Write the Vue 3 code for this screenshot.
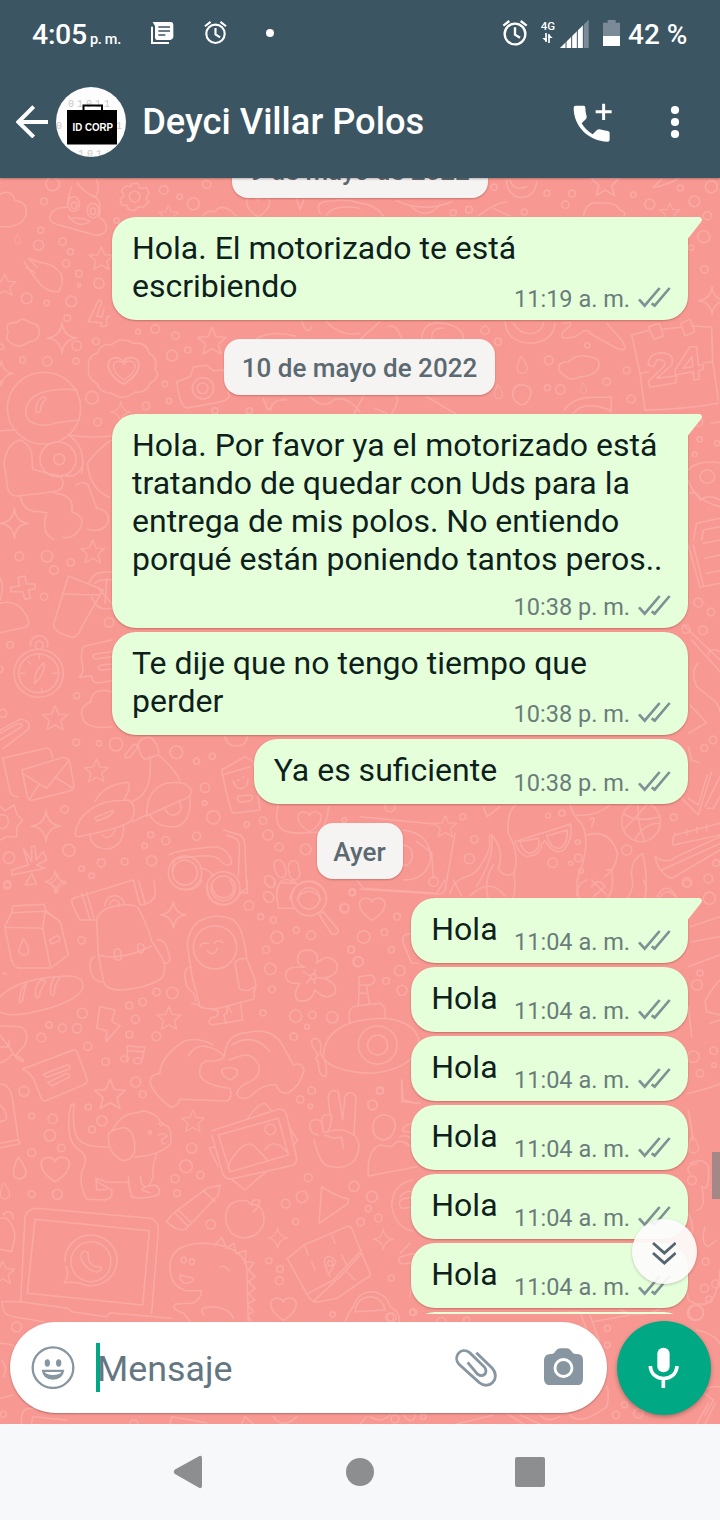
<script setup>
const items = [
  { kind: 'date', text: '9 de mayo de 2022', width: 256 },
  { kind: 'msg', lines: ['Hola. El motorizado te está', 'escribiendo'], time: '11:19 a. m.', tail: true, mode: 'overlap' },
  { kind: 'date', text: '10 de mayo de 2022', width: 271 },
  {
    kind: 'msg',
    lines: ['Hola. Por favor ya el motorizado está', 'tratando de quedar con Uds para la', 'entrega de mis polos. No entiendo', 'porqué están poniendo tantos peros..'],
    time: '10:38 p. m.', tail: true, mode: 'below'
  },
  { kind: 'msg', lines: ['Te dije que no tengo tiempo que', 'perder'], time: '10:38 p. m.', mode: 'overlap' },
  { kind: 'msg', lines: ['Ya es suficiente'], time: '10:38 p. m.', mode: 'inline' },
  { kind: 'date', text: 'Ayer', width: 86 },
  ...Array.from({ length: 7 }, (_, i) => ({
    kind: 'msg', lines: ['Hola'], time: '11:04 a. m.', tail: i === 0, mode: 'inline'
  }))
]

const star = 'M0-42 L12-14 L42-12 L19 8 L27 38 L0 22 L-27 38 L-19 8 L-42-12 L-12-14Z'
const spark = 'M0-42 Q4-4 40 0 Q4 4 0 42 Q-4 4-40 0 Q-4-4 0-42Z'
const heart = 'M0 34 C-58-4-40-42-8-30 Q-2-28 0-20 Q4-30 12-32 C46-38 54 2 0 34Z'
const drop = 'M-4-34 Q26 2 18 20 Q6 38-12 26 Q-26 12-4-34Z'

const sections = [
  {
    x: 0, y: 180,
    dots: [[132,64,10],[122,150,9],[116,196,15],[188,185,11],[211,215,9],[198,250,11],[237,281,10],[237,316,5],[297,310,15],[80,355,16],[140,369,8],[214,364,16],[202,414,10],[230,497,14],[288,484,10],[68,540,9],[142,544,14],[228,543,9],[158,12,20],[491,30,13],[539,50,8],[620,13,12],[580,71,18],[414,455,7],[466,447,13],[527,467,11],[563,510,9],[516,527,16],[495,612,8],[507,663,8],[438,678,11],[276,653,19],[293,726,11],[350,122,8],[3,500,8],[645,692,9],[748,692,9]],
    shapes: [[star,304,236,.85],[star,14,315,.8],[spark,186,474,1.1],[star,636,484,1],[spark,43,1030,1.05],[spark,362,696,.75],[heart,370,572,1.2],[heart,372,571,.85],[heart,774,80,.9],[drop,54,178,.45],[star,505,105,.7],[spark,4,580,.9],[drop,806,675,.5]],
    paths: [
      'M0 42 Q35 25 45 62 Q85 65 78 105 Q62 145 0 140', 'M215 20 Q200 60 205 82 Q160 80 150 108 Q145 128 175 134 L285 165 Q325 166 318 135 Q312 118 298 112 Q305 60 286 52 Q302 25 290 0 M232 10 Q255 40 286 52 M205 108 Q235 148 270 125 M208 116 Q240 110 268 122',
      'M204 72a17 22 0 1 0 34 0a17 22 0 1 0 -34 0 M262 92a17 22 0 1 0 34 0a17 22 0 1 0 -34 0 M214 76a8 10 0 1 0 16 0a8 10 0 1 0 -16 0 M271 94a8 10 0 1 0 16 0a8 10 0 1 0 -16 0',
      'M392 12l22-2 6 16 18-4 10 18-10 14 8 12-16 16-16-2-10 12-20-4-2-12-16 0-6-18 12-10-8-16 14-14 16 2Z M388 50a16 16 0 1 0 32 0a16 16 0 1 0 -32 0',
      'M72 245 L110 300 Q140 340 175 335 Q195 310 182 280 Q160 250 125 248 L85 235 M90 240 L112 262 M78 262 L105 278',
      'M296 360 L265 425 L305 428 L303 440 L320 438 L320 412 L330 408 M296 360 L306 364 L290 408 L305 412 L312 385',
      'M25 458 Q10 425 50 428 Q65 408 90 428 Q120 430 118 458 Q115 485 88 485 Q60 508 35 490 Q12 478 25 458Z',
      'M265 560 Q265 525 292 520 Q300 490 335 494 Q365 468 400 490 Q440 485 448 520 Q475 535 465 568 Q485 590 450 610 Q440 640 405 636 Q370 665 335 640 Q300 640 290 610 Q262 598 265 560Z',
      'M22 685a108 106 0 1 0 220 0a108 106 0 1 0 -220 0 M232 630 Q150 620 100 650 Q60 690 90 725 Q130 745 170 728 L238 720 M108 695 Q105 660 132 650 Q145 655 130 665 Q120 680 122 692 Q112 702 108 695Z',
      'M0 752 L40 750 M60 780 Q20 790 12 850 L20 900 Q20 950 55 948 L160 935 Q195 930 188 900 Q180 882 150 882 L98 868 L95 820 Q88 790 60 780 M120 838a54 52 0 1 0 108 0a54 52 0 1 0 -108 0 M162 838a16 16 0 1 0 32 0a16 16 0 1 0 -32 0',
      'M60 945 Q70 1000 120 995 L140 998 Q120 1060 160 1078 M165 940 Q225 945 215 995 Q260 1010 240 1045 Q220 1078 190 1072 M205 765 Q260 800 245 880 M185 885 Q235 900 250 850 M205 765 Q270 775 335 768 M262 850 Q300 800 335 780 M262 850 Q270 930 330 952 M228 915 Q262 895 270 930 L290 985 Q330 990 325 1025 Q310 1060 262 1048',
      'M530 605 L570 590 L580 562 L620 555 L640 572 L670 570 L688 650 Q680 665 640 670 L560 684 Q540 680 530 605Z M577 625a32 32 0 1 0 64 0a32 32 0 1 0 -64 0 M592 625a16 16 0 1 0 32 0a16 16 0 1 0 -32 0',
      'M610 108 Q620 90 645 95 Q660 72 690 90 L710 108 M890 58 L900 88 L912 60 M960 100 Q940 62 1000 62 Q1040 55 1080 70 M980 105 Q1000 72 1080 85 M770 475 Q820 450 885 468 M905 422 Q920 470 935 440 M980 425 Q1020 470 1080 460 M930 650 Q970 690 1000 660 Q1040 645 1080 695 M790 655 Q800 690 810 690 Q820 655 858 660'
    ]
  },
  {
    x: 360, y: 180,
    dots: [[402,22,9],[561,40,9],[636,41,10],[616,74,11],[820,44,8],[869,73,15],[961,24,9],[1003,64,16],[1054,20,18],[1042,107,12],[1031,170,18],[1033,268,11],[280,98,9],[327,89,10],[493,96,9],[375,451,12],[566,541,13],[682,496,8],[800,571,10],[740,605,11],[813,657,12],[562,623,9],[601,628,14],[993,203,8],[1019,778,8],[1071,790,8],[1004,823,7],[414,485,10],[1015,725,13]],
    shapes: [[star,736,8,1],[star,930,98,.7],[spark,1056,362,1],[drop,486,556,.8],[drop,415,636,.65],[drop,670,625,.5]],
    paths: [
      'M440 0a45 50 0 0 0 90 5 M450 0 Q460 35 500 20 M880 22 Q930 15 965 -12 M880 22 L910 -8 M110 62 Q190 100 275 65 M150 76 Q195 125 240 74 M355 108 Q400 70 440 65 M400 85 L450 108 M670 108 Q680 60 720 70 Q770 65 780 90 Q800 95 792 108 M0 70 Q45 72 70 108',
      'M435 425 Q440 485 510 490 Q580 485 585 430 M460 430 Q480 465 520 460 Q550 450 550 428 M610 430 Q655 420 610 455 Q590 485 650 468 Q680 440 690 460 L770 505 Q810 520 785 480 L740 430 M85 440 Q110 430 125 478 M185 476 Q190 420 250 430 Q310 440 310 476 M215 476 Q215 440 250 445 M0 478 L60 425 M70 645 Q140 630 95 700 M200 650 L285 700',
      'M598 572 Q590 545 625 545 Q650 520 690 530 Q725 535 715 565 Q700 590 660 590 Q630 610 598 572Z M458 640 Q462 612 490 614 Q518 620 512 645 Q500 678 482 674 Q458 665 458 640Z M612 690 Q640 650 710 652 L755 652 L752 696 M640 700 Q670 660 750 690',
      'M815 465 L870 450 M815 465 L840 580 L855 690 M905 448 L962 442 M1000 438 L1055 442 L1058 545 L1075 660 M855 690 Q965 690 1075 670 M840 580 L865 576 M1030 548 L1058 545 M865 440 L898 430 L910 468 L882 478Z M962 430 L990 418 L1004 455 L975 468Z',
      'M865 555 Q865 520 905 518 Q945 520 935 555 L890 595 L950 587 L948 608 L870 622 L865 605 L915 555 Q915 535 890 540 L882 560Z M990 500 L945 570 L945 585 L1000 575 L1002 600 L1018 598 L1016 572 L1030 568 L1030 555 L1015 555 L1010 500Z M996 530 L970 565 L998 560Z',
      'M985 870 Q1010 840 1080 848 M985 900 Q1000 960 1080 980 M1020 890a22 20 0 1 0 44 0a22 20 0 1 0 -44 0 M990 940 Q1015 930 1020 960 Q1050 940 1080 960 M1000 1080 L1010 1030 L1080 1015 M1025 1080 L1030 1050 L1080 1040 M1055 730 L1080 725 M45 685 L80 700 M-20 705 L15 640'
    ]
  },
  {
    x: 0, y: 540,
    dots: [[58,49,13],[141,49,17],[162,90,13],[212,67,11],[132,170,11],[30,315,10],[327,247,14],[230,467,9],[229,607,10],[297,610,8],[348,613,20],[529,637,19],[590,664,9],[637,649,9],[615,743,14],[614,789,7],[640,832,20],[194,808,11],[452,884,9],[434,917,8],[497,902,12],[590,889,12],[455,962,15],[374,965,10],[304,969,12],[245,986,8],[275,1007,8],[207,931,18],[27,953,17],[22,1037,10],[789,842,11],[740,853,8],[804,885,15],[837,921,12],[917,928,16],[0,388,9],[8,520,12],[1033,840,7],[1057,1056,10]],
    shapes: [[star,278,36,.85],[star,165,535,.9],[star,289,693,.85],[spark,138,858,1.1],[spark,165,1025,.8],[heart,928,845,.9]],
    paths: [
      'M32 142 L58 138 L55 112 L75 108 L80 132 L105 132 L105 146 L85 150 L92 175 L75 178 L68 155 L32 155Z M0 115 Q15 135 0 180 M0 190 Q50 175 78 225 Q95 255 75 262 L0 278',
      'M205 108 L160 255 Q165 280 220 292 Q235 288 240 270 L300 165 L185 162 M205 108 L310 150 L300 165 M268 128 Q280 90 335 96 M275 170 Q290 215 335 205 M285 130 Q300 115 335 120 M295 145 L335 190 M320 115 L315 190',
      'M42 400a74 72 0 1 0 148 0a74 72 0 1 0 -148 0 M56 400a60 58 0 1 0 120 0a60 58 0 1 0 -120 0 M92 318a26 26 0 1 1 50 4 M106 316a12 12 0 1 0 24 0a12 12 0 1 0 -24 0 M104 430 Q100 395 132 368 Q138 400 104 430Z M118 342v14 M125 445v12 M62 400h12 M158 400h12 M84 364l8 8',
      'M335 300 L255 318 Q240 325 246 370 Q255 395 238 412 L275 408 Q275 430 300 428 L335 422 M335 335 L285 342 Q272 350 285 357 L335 350 M335 372 L300 376 Q285 385 305 390 L335 387',
      'M335 455 Q275 440 272 485 Q235 500 248 535 Q260 570 335 560 M0 570 L60 538 Q95 540 85 568 L10 625 M0 600 L65 560 Q70 548 50 552 L0 580',
      'M55 770 Q30 770 28 745 L8 655 L140 624 Q155 625 158 655 M66 690 L190 652 Q210 655 212 680 L222 740 Q218 752 200 755 L100 780 Q82 785 80 760Z M68 700 L140 745 L208 660 M90 775 L118 732 M165 712 L220 745',
      'M235 890 Q215 890 240 840 Q280 785 350 782 L385 780 Q415 800 395 840 Q370 865 235 890 M285 785 Q310 735 380 727 Q400 735 370 782 M285 833 L340 810 Q345 825 290 843Z M270 885 Q275 930 330 926 Q375 910 370 858 M305 885 Q330 905 345 870 M398 845 L440 825 Q440 745 500 730 Q565 720 575 755 Q570 775 540 782 L440 828 M450 825 Q470 865 530 860 Q575 845 570 770 M495 800a24 24 0 1 0 42 -15 M395 785 Q460 765 450 650 M475 645 Q520 680 540 722 M415 610 Q430 585 455 595 Q480 620 475 645 L435 658 Q415 645 415 610Z M375 645 L400 615 Q412 608 412 625 L390 650 Q372 660 375 645',
      'M0 798 L15 812 L42 795 L52 825 L68 840 L50 862 L50 890 L20 890 L0 900 M0 825 Q25 820 25 848 Q20 870 0 865',
      'M70 925 L95 965 L95 920 L105 918 L108 960 L130 935 L140 960 L110 975 L135 985 L35 1005 L35 990 L85 975Z M75 1035 L95 1000 L110 1032Z',
      'M665 690 L735 650 L760 665 L780 810 L700 820 Q690 815 665 690Z M665 705 L750 680 M700 722a22 26 0 1 0 44 -5 M712 720l5 0 M727 712l5 0 M715 768 L752 765 Q765 775 750 782 L722 787 Q708 780 715 768 M675 590 Q680 620 715 618 Q740 615 742 590 M835 795 Q820 850 850 872 Q890 885 960 875 Q985 845 985 800',
      'M508 945 Q520 930 650 920 Q690 930 695 970 Q680 985 660 960 Q640 935 525 958 L515 995 M505 998a50 50 0 1 0 100 0a50 50 0 1 0 -100 0 M518 998a37 37 0 1 0 74 0a37 37 0 1 0 -74 0 M620 1045a50 50 0 1 0 100 0a50 50 0 1 0 -100 0 M633 1045a37 37 0 1 0 74 0a37 37 0 1 0 -74 0 M600 985 Q625 985 640 1008 M670 870 L720 885 Q735 895 735 920 L740 1045 L718 1060 M680 885 L705 895 Q718 900 718 925 L715 1010',
      'M825 990a16 22 -20 1 0 30 -8a16 22 -20 1 0 -30 8 M868 995a16 20 0 1 0 28 -8 M868 995a16 20 0 1 1 28 -8 M795 1010 Q815 1000 825 1025 Q830 1045 805 1040 Q790 1025 795 1010 M830 1080 Q825 1020 860 1018 L890 1030 M870 1080a55 55 0 0 1 110 0 M890 1080a38 38 0 0 1 72 0'
    ]
  },
  {
    x: 360, y: 540,
    dots: [[1015,188,13],[1053,216,11],[1029,271,13],[1059,600,11],[1033,624,10],[941,832,10],[1069,969,10],[1045,1016,13],[981,1027,14],[800,930,15],[655,954,11],[632,970,6],[663,993,7],[653,906,7],[606,820,9],[565,827,7],[308,830,9],[343,898,11],[328,956,15],[978,268,12],[578,968,14],[90,800,15]],
    shapes: [[star,256,860,.8]],
    paths: [
      'M985 15 L1020 142 L1080 130 M1000 15 L1030 135 M1030 10 L1080 0 M1035 55 L1080 45 M1040 100 L1080 92 M970 255 L1080 360 M995 300 L1080 395 M1045 345 Q1050 320 1080 335 M1015 370 Q990 390 1010 440 L1060 480 Q1075 490 1080 515 M990 495 L1040 548 L985 580 M985 620 L995 660 L1018 668',
      'M965 775 L1015 825 L1055 695 M985 775 L1015 795 L1042 705 M1035 800 L1080 710 M1040 805 L1060 805 L1080 770 M785 845a58 60 0 1 0 116 0a58 60 0 1 0 -116 0 M790 820 Q830 850 900 830 M835 788 Q830 850 855 905 M865 790 Q830 830 790 870 M900 850 Q850 850 825 900',
      'M465 905 L632 852 Q640 900 610 932 Q580 945 555 902 L545 912 Q545 945 500 950 Q475 940 465 905Z M480 905 L535 895 Q545 935 505 940 Q485 930 480 905Z M560 888 L622 870 Q622 915 600 925 Q575 930 560 888Z',
      'M445 880 Q440 820 465 795 M445 880 Q480 940 462 1000 Q430 1015 415 985 Q435 930 395 885 Q385 880 390 920 Q360 1000 320 1010 Q280 1020 270 1060 M395 885 Q405 950 350 1040 M462 1000 Q470 1060 455 1080 M400 975 Q370 1020 385 1080 M630 795 Q640 830 665 850 Q690 900 665 980 Q640 1030 660 1080 M680 885 Q750 865 772 940 Q770 985 735 1010 M650 825 Q710 830 750 795 M695 860 Q710 820 690 840 M740 990 L755 990 Q765 1050 740 1078 M695 1040 Q715 1010 735 1040 L700 1070 M848 940 Q865 1010 855 1075 M848 940 Q810 960 815 1010 Q825 1040 800 1080 M895 1080 Q920 1030 955 1080',
      'M0 830 L225 852 M285 880 L255 1050 Q250 1065 230 1062 L0 1048 M130 870 Q210 880 212 955 Q200 1020 130 1020 M130 915 Q165 920 155 960 Q145 980 130 975 M170 905 L215 938 L220 1015 M207 1025a14 14 0 1 0 28 0a14 14 0 1 0 -28 0 M370 800 L382 830 L420 800',
      'M945 880 Q935 900 940 915 L1080 885 M945 885 L1080 850 M885 950 Q895 1000 935 1015 L1080 930 M885 950 Q920 975 950 950 L1080 890 M905 990 L1080 910 M980 868v18 M1010 862v18 M1040 855v18'
    ]
  },
  {
    x: 0, y: 880,
    dots: [[22,12,10],[245,181,11],[747,77,14],[782,110,9],[820,120,9],[831,172,18],[889,150,9],[933,166,13],[798,209,11],[811,267,17],[816,328,10],[789,398,9],[887,408,18],[937,405,11],[997,412,17],[921,440,7],[881,470,11],[470,336,11],[517,339,17],[388,377,10],[428,366,11],[406,418,12],[388,464,10],[469,469,13],[247,400,15],[147,435,9],[187,444,12],[231,445,14],[124,473,13],[263,499,12],[317,545,11],[407,606,15],[428,643,10],[72,634,15],[935,632,11],[901,658,11],[931,679,7],[1033,85,14],[1056,37,10],[1054,209,10],[1074,245,15]],
    shapes: [[spark,520,104,.95],[star,507,415,.85],[star,330,644,1.1],[spark,172,10,.7]],
    paths: [
      'M38 78 L132 73 L138 92 L180 124 L205 225 L152 264 L55 264 Q35 260 30 220 L14 140 L35 98Z M35 98 L135 94 L128 145 L14 142 M135 94 L180 124 M128 145 L152 264 M70 175 Q95 215 80 224 Q60 230 56 210Z M148 180 L170 167 Q182 172 178 182 L155 192Z M10 280 L18 282',
      'M220 55 Q205 60 240 120 L285 120 M220 55 L360 12 L400 0 M245 40 L270 118 M260 38 L282 116 M400 0 L420 75 Q460 70 466 45 L462 0 M415 0 L435 68 M315 78a28 28 0 1 1 58 -4 M330 74a14 14 0 1 1 28 0',
      'M290 120 Q300 85 350 78 Q400 68 415 85 Q440 130 456 185 M290 120 L295 225 Q360 245 455 198 M295 225 L310 300 Q315 330 360 330 Q440 325 485 295 Q500 270 490 240 L456 185 M285 230 Q265 235 272 275 Q280 305 305 306 M470 180 Q490 175 500 200 L510 235 Q510 250 495 250 M343 210 Q355 200 363 215 L362 238 Q350 245 343 232Z M413 195 Q428 185 433 202 Q430 220 420 220 Q412 212 413 195',
      'M575 370 L595 375 Q605 390 655 385 L760 358 Q765 350 762 335 L768 320 L765 300 L740 235 Q730 140 700 120 Q650 95 595 125 Q565 150 562 195 L575 285 L600 380 M580 202a65 65 0 1 0 130 0a65 65 0 1 0 -130 0 M600 200 Q605 185 625 190 M642 190 Q655 175 668 188 M620 210 Q640 235 652 205 M575 262 Q550 260 556 300 Q560 330 580 338 L588 362 M705 250 Q710 235 740 235 M705 250 L718 325 Q740 340 765 320 M633 388 L655 392 L652 408 L632 415 Q622 430 635 435 L728 420 L722 372 M680 380 L682 398 L672 405 L678 430 M685 380 L695 398',
      'M0 350 Q60 290 215 288 Q255 295 248 325 Q230 370 85 400 Q20 410 0 395 M58 365 Q60 320 80 310 Q70 340 68 360 Q62 370 58 365 M108 352 Q100 320 125 298 M125 298 L138 305 Q120 330 118 348 Q112 358 108 352 M152 342 Q148 310 165 290 M180 292 Q160 320 164 342 Q158 350 152 342',
      'M895 250 Q885 215 920 210 Q960 210 950 250 Q985 215 1010 250 Q1020 285 970 295 Q1015 310 1005 340 Q980 365 945 330 Q935 370 895 362 Q875 345 900 310 Q860 315 857 285 Q860 255 915 262Z M932 290a8 8 0 1 0 16 0a8 8 0 1 0 -16 0 M910 275 L928 287 M945 270l-3 14 M965 295l-15-3 M920 308l12-12 M945 310l-3-12',
      'M300 380 L345 390 L335 425 L360 437 L318 485 L320 452 L290 445Z M380 542 Q385 510 380 498 L435 502 L425 545 M380 512 L430 515 M362 537a12 9 0 1 0 24 0a12 9 0 1 0 -24 0 M401 542a12 9 0 1 0 24 0a12 9 0 1 0 -24 0',
      'M0 437 L62 440 Q90 455 75 495 L48 525 L70 540 Q70 550 50 535 L38 520 Q20 545 0 548 M0 465 L38 515 M28 480 L25 502 L0 500 M68 567 L220 510 Q230 508 235 525 L262 600 Q262 612 245 617 L135 663 Q125 662 122 650 L100 595 Q85 575 68 567Z M130 583 L200 555 Q215 555 208 567 L140 592Z M143 608 L200 580 Q215 585 205 593 L155 618Z',
      'M565 527 Q590 490 620 500 Q660 508 672 530 Q665 545 620 543 Q595 550 600 585 Q610 615 690 625 Q700 655 680 663 L540 658 Q530 685 510 680 Q470 650 455 620 Q440 585 480 580 Q480 540 530 500 Q570 460 640 495 M672 530 Q680 460 740 458 Q820 440 850 500 L880 555 Q905 545 912 570 Q900 620 865 638 Q840 645 828 615 Q790 610 750 650 Q720 665 710 640 Q720 615 750 605 Q780 590 778 560 Q760 515 720 528 L688 540 M695 495 Q760 455 810 515 M665 570 Q685 555 712 570 Q715 590 690 600 Q665 590 665 570',
      'M0 612 Q30 610 38 660 L55 780 M0 675 Q25 700 18 720 L0 725',
      'M835 85 Q825 30 840 8 L890 10 M875 55a52 52 0 1 0 104 0a52 52 0 1 0 -104 0 M895 55a32 32 0 1 0 64 0a32 32 0 1 0 -64 0 M958 105 L970 95 L1015 150 Q1015 168 995 162Z M835 85 L880 85 M792 0 Q800 25 820 20 L825 0 M792 38 Q812 30 822 50 Q820 72 800 65 Q788 55 792 38 M622 15 Q620 70 672 74 Q710 70 720 38 L742 40 L742 0 M635 15 Q640 52 672 54 Q705 48 700 20 L690 0 M510 0 Q525 30 560 30 Q595 28 605 0'
    ]
  },
  {
    x: 0, y: 1080,
    dots: [[158,117,14],[150,166,17],[95,108,9],[265,81,9],[306,122,15],[276,149,10],[95,218,12],[184,204,11],[95,343,10],[172,343,15],[575,205,15],[558,259,19],[525,296,12],[601,285,11],[531,340,10],[632,433,14],[857,371,13],[906,351,17],[887,425,9],[925,293,12],[1062,319,15],[1116,350,16],[1105,386,9],[1135,414,11],[1082,426,11],[1139,33,10],[1117,75,14],[807,542,9],[840,567,10],[838,602,12],[1174,594,9],[998,703,8],[50,741,15],[1238,697,9]],
    shapes: [[star,579,124,.8],[heart,165,268,1.1],[heart,850,687,1],[drop,58,266,1],[drop,14,334,.75],[spark,833,474,.75],[spark,1150,478,.75],[star,8,578,.85]],
    paths: [
      'M0 190 L50 180 L60 185 L58 192 L0 203 M222 72 Q215 150 235 178 Q260 205 325 200 M222 72 L213 74 Q190 180 240 212 Q270 230 245 275 L243 305 Q250 350 262 358 L315 360 Q340 355 335 330 L300 310 Q285 300 295 295 L320 307 L385 307 L395 350 Q425 360 475 345 Q485 325 465 315 L435 320 Q420 315 422 290 M470 222 Q455 260 460 290 L448 315 M385 290 L388 330 M288 295 L290 330 L320 328 M435 320 L425 330 L450 338',
      'M325 170 Q325 225 370 242 Q415 235 402 180 Q390 130 350 148 Q320 155 325 170 M405 232 L450 225 Q500 210 512 190 Q515 150 505 140 Q480 130 475 115 Q465 100 430 92 L410 98 M335 155 Q360 100 410 98 M475 165 Q490 155 502 168 L485 178 Q485 195 495 190 M478 130a6 6 0 1 0 12 0 M446 157a4 5 0 1 0 8 0a4 5 0 1 0 -8 0',
      'M635 152 L835 88 Q855 85 860 105 L890 235 Q890 255 870 258 L690 298 Q670 295 665 270 L635 165 M655 165 L835 115 L865 225 L690 275Z M685 265 L690 245 Q730 180 760 195 L800 238 M795 210 Q820 170 860 215 M795 148a16 16 0 1 0 32 0a16 16 0 1 0 -32 0 M745 112 Q775 70 795 70 L815 92 M870 145 L892 180 L882 195 M645 200 L628 205 L655 260 M695 298 L735 330 L780 290 L800 275',
      'M955 165 Q925 160 930 130 Q940 110 965 125 Q965 100 990 105 L985 55 Q985 25 1015 35 L1028 120 L1035 50 Q1050 25 1068 50 L1062 165 Q1090 190 1065 240 Q1030 275 975 255 Q955 235 942 180 M965 125 L970 155 Q990 170 995 105 M985 155 Q1025 140 1062 165 M975 165 L1000 175 L1025 172 L1030 205',
      'M1118 145 Q1120 105 1155 104 Q1190 110 1185 145 Q1175 180 1150 180 Q1120 175 1118 145 M1105 288 Q1100 210 1140 195 L1175 200 Q1190 175 1220 190 L1240 205 M1105 288 L1250 260 M1238 300 Q1180 310 1175 375 Q1185 445 1238 452 M1238 350 L1205 358 Q1190 370 1205 385 L1238 382 M1238 130 Q1200 140 1210 155 L1238 155 M1205 0 L1205 65 L1260 70 M1240 520 L1200 532 Q1190 545 1205 552 L1240 548',
      'M500 425 Q505 415 520 400 L620 325 L660 315 L655 345 L560 445 Q535 460 500 425 M525 400 L565 440 M535 390 L575 430 M610 332 L645 365 M740 362 Q700 360 685 380 Q665 420 695 460 Q730 485 765 465 Q800 440 790 400 Q780 370 755 375Z M755 375 Q755 355 778 360 Q780 380 760 395 M965 320 L957 430 L1045 370 L1045 358 Q1000 345 965 320',
      'M75 410 Q85 385 110 385 L450 415 Q475 420 475 450 L455 700 M75 410 L62 665 M105 418 L448 452 L428 675 L82 640Z M5 665 L60 665 L205 685 L215 695 L320 710 L330 698 L515 715 M5 665 L10 690 Q15 705 40 710 L130 725',
      'M195 545a78 76 0 1 1 45 65 Q215 605 192 608 Q210 590 198 560 M213 545a60 60 0 1 0 120 0a60 60 0 1 0 -120 0 M245 520 Q255 508 265 520 L265 535 Q265 550 285 560 L302 560 Q308 570 290 577 Q260 570 248 545 Q240 535 245 520',
      'M510 560 Q510 495 600 490 Q720 490 740 560 L745 725 M510 560 Q510 620 560 632 L605 632 Q600 665 575 670 L525 672 Q515 690 550 698 L570 725 M540 585 L580 595 Q580 610 555 610 Q540 605 540 585 M543 540a8 8 0 1 0 16 0a8 8 0 1 0 -16 0 M568 545a8 8 0 1 0 16 0a8 8 0 1 0 -16 0 M660 560 Q675 555 688 572 M612 705 Q590 680 640 680 Q690 685 700 715 M645 495 L665 472 L680 505 L702 490 L708 520 L738 512 L735 545 L762 548 L745 570 L766 590 L745 605 L766 625 L745 640 L765 660 L742 672 L760 695 L742 705 L755 725',
      'M862 535 L912 495 L1040 440 Q1050 435 1055 445 L1110 580 Q1112 592 1095 597 L1010 655 L950 667 Q935 665 925 650Z M925 640 L1000 600 L1085 510 M940 665 L1030 580 L1085 520 M1035 570 L1065 600 M915 500l10 25 M935 545l10 25 M995 465 L1005 490 M1025 525 L1040 555 M990 590 Q970 550 975 535 Q990 520 1008 545 L990 578 M983 550a8 8 0 1 0 16 0a8 8 0 1 0 -16 0',
      'M1035 725 Q1050 690 1060 680 Q1075 635 1115 635 Q1160 640 1170 680 Q1200 695 1198 725 M1065 695 Q1070 650 1115 650 Q1150 655 1155 690Z M1157 712a12 12 0 1 0 24 0a12 12 0 1 0 -24 0 M0 415 L20 415 Q45 440 45 470 L35 515 L0 508 M10 405a14 14 0 1 1 28 10'
    ]
  },
  {
    x: 200, y: 880,
    dots: [[434,84,12],[457,38,9],[591,110,10],[491,171,19],[553,157,10],[453,209,10],[475,245,14],[574,209,9],[599,272,16],[558,303,10],[606,331,15],[540,631,10],[518,675,14],[1461,10,11],[1528,55,18],[1500,279,9],[1491,315,16],[1480,530,17],[1541,512,11],[1542,555,7],[1500,580,11]],
    shapes: [[heart,516,87,1]],
    paths: [
      'M370 535 Q370 415 560 415 Q660 430 658 500 Q630 570 510 580 Q400 575 370 535 M475 495a58 57 0 1 0 116 0a58 57 0 1 0 -116 0 M503 495a30 30 0 1 0 60 0a30 30 0 1 0 -60 0 M450 430 Q440 380 470 378 L540 370 Q558 375 556 412 M475 375 Q480 290 475 290 L515 285 Q530 295 520 310 L500 318 L508 370 M475 315h25 M478 340h25 M355 525 Q320 480 345 475 Q370 480 360 520 Q385 545 378 590 Q355 590 355 545 Q340 535 355 525 M640 160 Q600 160 610 190 L635 250 L655 250 M605 600 L610 660 L650 670 M470 0 L490 25 L710 40 L735 0 M760 0 L785 48 M810 48 Q870 -10 915 48 M1130 48 Q1130 10 1160 0 M1175 0 L1220 45 M1330 0 Q1345 25 1335 48 M1370 50 Q1400 0 1430 50 M1470 140 L1560 110 M1475 185 L1560 170 M1465 260 L1560 225',
      'M1560 300 Q1530 330 1515 365 L1520 395 L1560 405 M1560 420 L1530 430 M1465 380 L1475 470 M1465 640 Q1550 620 1560 610 M1465 690 L1480 780'
    ]
  },
  {
    x: 400, y: 1130,
    dots: [[876,151,13],[917,395,10],[913,475,12],[947,462,12],[927,508,10],[886,548,24],[38,547,9],[124,576,14],[200,570,9]],
    shapes: [[drop,880,45,.8]],
    paths: ['M870 100 Q910 80 925 110 Q930 190 905 170 Q920 235 890 240 M870 130 Q850 110 890 100 M915 290 Q900 340 925 350 L950 330 M865 250 Q890 300 865 330 M0 20 Q30 10 40 40 M0 200 Q20 180 36 185 M0 370 L30 340 M30 500 L35 460 M860 480 L865 510 Q950 560 960 420', 'M400 550 L540 545 L560 600 M580 575 L690 555']
  },
  {
    x: 0, y: 1300,
    dots: [[10,343,9]],
    shapes: [],
    paths: ['M0 130 Q50 130 60 160 M0 295 L40 285 M5 180 Q25 205 10 230 M65 372 Q60 330 85 325 L240 340 M95 370 L98 350 L200 360 M510 372 L515 350 L620 368 M725 372 L735 350 L760 372 M820 350 Q850 390 890 350 M390 372a12 12 0 0 1 24 0']
  },
  {
    x: 360, y: 1300,
    dots: [[1008,38,22],[742,85,9],[794,314,9],[768,345,11],[105,357,12],[190,350,8],[835,340,14],[742,135,8],[160,37,10],[95,52,13]],
    shapes: [],
    paths: ['M290 372 L400 345 M440 340 L490 372 M480 345 L540 372 M540 345 Q560 370 600 350 M630 345 Q660 380 740 320 Q750 280 740 260 M690 45 L720 130 M1010 300 Q1030 255 1080 260 M1035 280 L1060 300 L1035 345 M1010 372 L1045 310 M1035 372 L1065 310 M130 345 Q160 380 165 345 M30 350 Q60 372 90 345 M0 372 L20 350 M780 30 Q850 60 910 20 M1010 90 Q1060 100 1080 130']
  }
]
</script>

<template>
  <div class="phone">
    <header class="header">
      <div class="status">
        <div class="clock">4:05<span>p. m.</span></div>
        <svg class="i-news" viewBox="450 63 72 72"><path d="M456 80V129H507" fill="none" stroke="#fff" stroke-width="6" /><path d="M458 66H513Q520 67 520 74V112Q518 119 511 120H472Q464 118 465 110V78Z" fill="#fff" /><path d="M475 81H510M475 93H510M475 105H496" stroke="#3b5563" stroke-width="5" /></svg>
        <svg class="i-alarm left-alarm" viewBox="610 60 76 76"><g fill="none" stroke="#fff" stroke-width="6.500"><circle cx="648" cy="102" r="28" /><path d="M648 84V104L662 113M616 79L633 66M680 79L663 66" /></g></svg>
        <i class="dot"></i>
        <span class="grow"></span>
        <svg class="i-alarm right-alarm" viewBox="426 58 80 80"><g fill="none" stroke="#fff" stroke-width="7"><circle cx="465" cy="103" r="31" /><path d="M465 83V105L480 114M430 78L448 64M500 78L482 64" /></g></svg>
        <div class="net"><b>4G</b><svg viewBox="548 100 32 32"><path d="M560 100V126M569 104V130" stroke="#fff" stroke-width="5" /><path d="M549 115H562V128ZM567 102V115H580Z" fill="#fff" /></svg></div>
        <svg class="i-signal" viewBox="600 56 86 88"><path d="M600 143L686 58V143Z" fill="#7b8a97" /><path d="M600 143L670 74V143Z" fill="#fff" /><path d="M618 120V144M635 100V144M652 85V144M670 65V144" stroke="#3b5563" stroke-width="3" /></svg>
        <svg class="i-batt" viewBox="729 60 51 78"><path d="M729 68H743V60H767V68H780V108H729Z" fill="#7b8a97" /><path d="M729 108H780V138H729Z" fill="#fff" /></svg>
        <div class="pct">42 %</div>
      </div>
      <div class="bar">
        <svg class="i-back" viewBox="48 315 98 98"><path d="M144 366H55M101 320L55 366L101 411" fill="none" stroke="#fff" stroke-width="12" /></svg>
        <svg class="avatar" viewBox="0 0 70 70">
          <defs><clipPath id="av"><circle cx="35" cy="35" r="35" /></clipPath></defs>
          <g clip-path="url(#av)">
            <rect width="70" height="70" fill="#fdfdfd" />
            <g class="bits"><text x="12" y="20">01011</text><text x="0" y="42">0</text><text x="60" y="42">1</text><text x="22" y="70">101</text></g>
            <path d="M27.500 24V18.500H46V24" fill="none" stroke="#000" stroke-width="2" />
            <rect x="11" y="23" width="50" height="34.500" fill="#000" />
            <text class="corp" x="16.500" y="43.500" textLength="40.500" lengthAdjust="spacingAndGlyphs">ID CORP</text>
          </g>
        </svg>
        <h1>Deyci Villar Polos</h1>
        <svg class="i-call" viewBox="640 310 118 118"><path d="M648 318H672Q677 318 677 324Q677 337 681 350Q682 355 679 358L666 371Q677 391 699 404L712 391Q716 388 720 389Q732 393 745 394Q750 395 750 400V420Q750 426 744 426C686 424 642 380 642 324Q642 318 648 318Z" fill="#fff" /><path d="M732 312V361M708 336H756" stroke="#fff" stroke-width="9" /></svg>
        <svg class="i-more" viewBox="0 0 10 34"><circle cx="5" cy="5" r="4.100" /><circle cx="5" cy="17" r="4.100" /><circle cx="5" cy="29" r="4.100" /></svg>
      </div>
    </header>

    <main class="chat">
      <svg class="wallpaper" viewBox="0 178 720 1246">
        <g v-for="(s, i) in sections" :key="i" :transform="`translate(${s.x} ${s.y}) scale(.33333)`">
          <circle v-for="(d, j) in s.dots" :key="'d' + j" :cx="d[0]" :cy="d[1]" :r="d[2]" />
          <path v-for="(p, j) in s.shapes" :key="'s' + j" :d="p[0]" :transform="`translate(${p[1]} ${p[2]}) scale(${p[3]})`" />
          <path v-for="(p, j) in s.paths" :key="'p' + j" :d="p" />
        </g>
      </svg>

      <div class="viewport">
        <div class="list">
          <template v-for="(m, i) in items" :key="i">
            <div v-if="m.kind === 'date'" class="chip" :style="{ width: m.width + 'px' }">{{ m.text }}</div>
            <div v-else class="bubble" :class="[m.mode, { tailed: m.tail }]">
              <svg v-if="m.tail" class="tail" viewBox="0 0 15 23"><path d="M0 0H11.500Q15.500 1.200 13 5L0 21.500Z" fill="#e5ffdb" /></svg>
              <div class="text"><div v-for="(l, j) in m.lines" :key="j">{{ l }}</div></div>
              <div class="meta">
                <span>{{ m.time }}</span>
                <svg viewBox="830 317 105 68"><path d="M836 357L853 376L898 323M874 369L883 376L928 323" /></svg>
              </div>
            </div>
          </template>
        </div>
      </div>

      <i class="thumb"></i>
      <div class="down"><svg viewBox="755 332 74 72"><path d="M758 338L792 368L826 338M758 368L792 398L826 368" fill="none" stroke="#54656f" stroke-width="8.500" /></svg></div>

      <footer class="composer">
        <div class="field">
          <svg class="i-smile" viewBox="92 139 132 130"><circle cx="158" cy="204" r="61" fill="none" stroke="#8796a1" stroke-width="7" /><ellipse cx="141" cy="190" rx="8" ry="11" fill="#8796a1" /><ellipse cx="175" cy="190" rx="8" ry="11" fill="#8796a1" /><path d="M124 210H192Q188 240 158 240Q128 240 124 210Z" fill="#8796a1" /><path d="M133 217H183Q180 225 158 226Q137 225 133 217Z" fill="#fff" /></svg>
          <i class="caret"></i>
          <span class="placeholder">Mensaje</span>
          <svg class="i-clip" viewBox="284 144 132 120"><path d="M351 158L399 205C425 235 390 272 360 248L299 193C279 170 305 138 331 158L376 202C387 220 371 234 354 222L325 187" fill="none" stroke="#8796a1" stroke-width="8.500" /></svg>
          <svg class="i-cam" viewBox="555 143 118 112"><path d="M574 161H579Q586 160 590 152Q595 144 603 144H624Q632 144 637 152Q641 160 648 161H655Q672 162 672 178V237Q672 254 655 255H573Q556 254 555 237V178Q557 162 574 161Z" fill="#8796a1" /><circle cx="613.500" cy="203" r="25.500" fill="none" stroke="#fff" stroke-width="8.500" /></svg>
        </div>
        <div class="mic"><svg viewBox="866 141 94 126"><rect x="894" y="143" width="37" height="74" rx="18" fill="#fff" /><path d="M873 198C875 248 951 248 953 198M912 236V264" fill="none" stroke="#fff" stroke-width="11" /></svg></div>
      </footer>
    </main>

    <nav class="nav">
      <svg viewBox="0 0 720 96" fill="#8c8e90"><path d="M175 45.500L199 32.200Q202 31 202 34V62Q202 65 199 63.800L175 50Q172.500 47.800 175 45.500Z" /><circle cx="360" cy="48" r="14" /><rect x="515" y="33" width="30" height="30" rx="2" /></svg>
    </nav>
  </div>
</template>

<style>
body { margin: 0; overflow: hidden; }
</style>
<style scoped>
.phone { width: 720px; height: 1520px; display: flex; flex-direction: column; font-family: Roboto, "Liberation Sans", sans-serif; background: #f79992; overflow: hidden; }
svg { display: block; flex: none; }
.header { height: 178px; background: #3b5563; color: #fff; flex: none; position: relative; z-index: 2; box-shadow: 0 1px 2px rgba(60, 40, 40, .35); }
.status { height: 70px; padding: 0 32px; display: flex; align-items: center; font-weight: 500; box-sizing: border-box; }
.clock { width: 118px; font-size: 28.500px; line-height: 34px; white-space: nowrap; letter-spacing: -.3px; margin-top: 4px; }
.clock span { font-size: 14.500px; margin-left: 3px; }
.i-news { width: 24px; height: 24px; margin-top: -4px; }
.i-alarm { margin-top: -5px; }
.left-alarm { width: 25px; height: 25px; margin-left: 29px; }
.right-alarm { width: 26.700px; height: 26.700px; }
.dot { width: 8px; height: 8px; border-radius: 50%; background: #fff; margin: -4px 0 0 38px; }
.grow { flex: 1; }
.net { width: 15px; margin: -5px 5px 0 12px; display: flex; flex-direction: column; align-items: center; }
.net b { font-size: 11.500px; line-height: 11px; font-weight: 500; }
.net svg { width: 10.700px; height: 10.700px; margin-top: 1px; }
.i-signal { width: 28.700px; height: 29.300px; margin-top: -3px; }
.i-batt { width: 17px; height: 26px; margin: -4px 8px 0 14px; }
.pct { width: 60px; font-size: 28px; line-height: 34px; white-space: nowrap; }
.bar { height: 104px; display: flex; align-items: center; padding-left: 16px; }
.i-back { width: 32.700px; height: 32.700px; margin-top: -1px; }
.avatar { width: 70px; height: 70px; margin-left: 7.500px; }
.bits { font: 10px "Liberation Mono", monospace; fill: #c9c9c9; letter-spacing: 3px; }
.corp { font: bold 10px "Liberation Sans", sans-serif; fill: #fff; }
h1 { font-size: 36.250px; line-height: 44px; font-weight: 500; margin: 0 0 0 16px; width: 431px; white-space: nowrap; }
.i-call { width: 39.300px; height: 39.300px; margin-top: 2px; }
.i-more { width: 10px; height: 34px; margin-left: 58px; fill: #fff; }
.chat { height: 1246px; flex: none; position: relative; display: flex; flex-direction: column; }
.wallpaper { position: absolute; left: 0; top: 0; width: 720px; height: 1246px; fill: none; stroke: #faaaa4; stroke-width: 4.600; stroke-linejoin: round; stroke-linecap: round; }
.viewport { height: 1136px; overflow: hidden; position: relative; }
.list { margin-top: -36px; padding-right: 32px; display: flex; flex-direction: column; align-items: flex-end; }
.chip { height: 56px; line-height: 58px; border-radius: 16px; background: #f6f3f3; color: #5b6970; font-weight: 500; font-size: 26px; text-align: center; align-self: center; margin: 0 0 19px 31px; box-shadow: 0 1px 2px rgba(120, 40, 40, .35); white-space: nowrap; }
.bubble { position: relative; box-sizing: border-box; width: 576px; padding: 12px 16px 7px 20px; border-radius: 24px; background: #e5ffdb; color: #0e1f1c; box-shadow: 0 1px 2px rgba(120, 50, 40, .4); margin-bottom: 4px; display: flex; flex-direction: column; }
.bubble:has(+ .chip) { margin-bottom: 19px; }
.tailed { border-top-right-radius: 0; }
.tail { position: absolute; left: calc(100% - .5px); top: 0; width: 15px; height: 23px; }
.text { font-size: 32px; line-height: 38px; white-space: nowrap; }
.meta { display: flex; align-items: center; align-self: flex-end; height: 28px; gap: 7px; color: #6a7d7a; font-size: 23.500px; line-height: 28px; white-space: nowrap; }
.meta svg { width: 35px; height: 22.700px; fill: none; stroke: #7f9194; stroke-width: 8; margin-top: -3px; }
.overlap .meta { margin-top: -20px; }
.below .meta { margin-top: 15px; }
.inline { width: auto; flex-direction: row; justify-content: space-between; gap: 16.500px; }
.inline .text { padding-bottom: 8px; }
.thumb { position: absolute; right: 0; top: 974px; width: 8px; height: 47px; background: #a48887; }
.down { position: absolute; left: 631.500px; top: 1040.500px; width: 65px; height: 65px; border-radius: 50%; background: rgba(253, 251, 252, .93); box-shadow: 0 1px 3px rgba(80, 60, 60, .3); display: flex; align-items: center; justify-content: center; }
.down svg { width: 24.700px; height: 24px; margin-top: 3px; }
.composer { position: relative; height: 110px; display: flex; align-items: flex-start; padding: 7px 9px 0 10px; box-sizing: border-box; justify-content: space-between; }
.field { width: 597px; height: 91px; margin-top: 1px; border-radius: 46px; background: #fff; box-shadow: 0 1px 2px rgba(90, 40, 40, .4); display: flex; align-items: center; box-sizing: border-box; padding-left: 20.700px; }
.i-smile { width: 44px; height: 43.300px; }
.caret { width: 4px; height: 49px; background: #00a884; margin-left: 21.300px; flex: none; }
.placeholder { font-size: 35.800px; line-height: 42px; color: #647681; width: 356.700px; flex: none; margin-left: -3px; margin-top: 2px; }
.i-clip { width: 44px; height: 40px; }
.i-cam { width: 39.300px; height: 37.300px; margin-left: 46px; margin-top: -2px; }
.mic { width: 94px; height: 94px; border-radius: 50%; background: #00a884; box-shadow: 0 2px 4px rgba(90, 40, 40, .4); display: flex; align-items: center; justify-content: center; }
.mic svg { width: 31.300px; height: 42px; }
.nav { height: 96px; background: #f7f8fa; position: relative; }
.nav svg { width: 720px; height: 96px; }
</style>
